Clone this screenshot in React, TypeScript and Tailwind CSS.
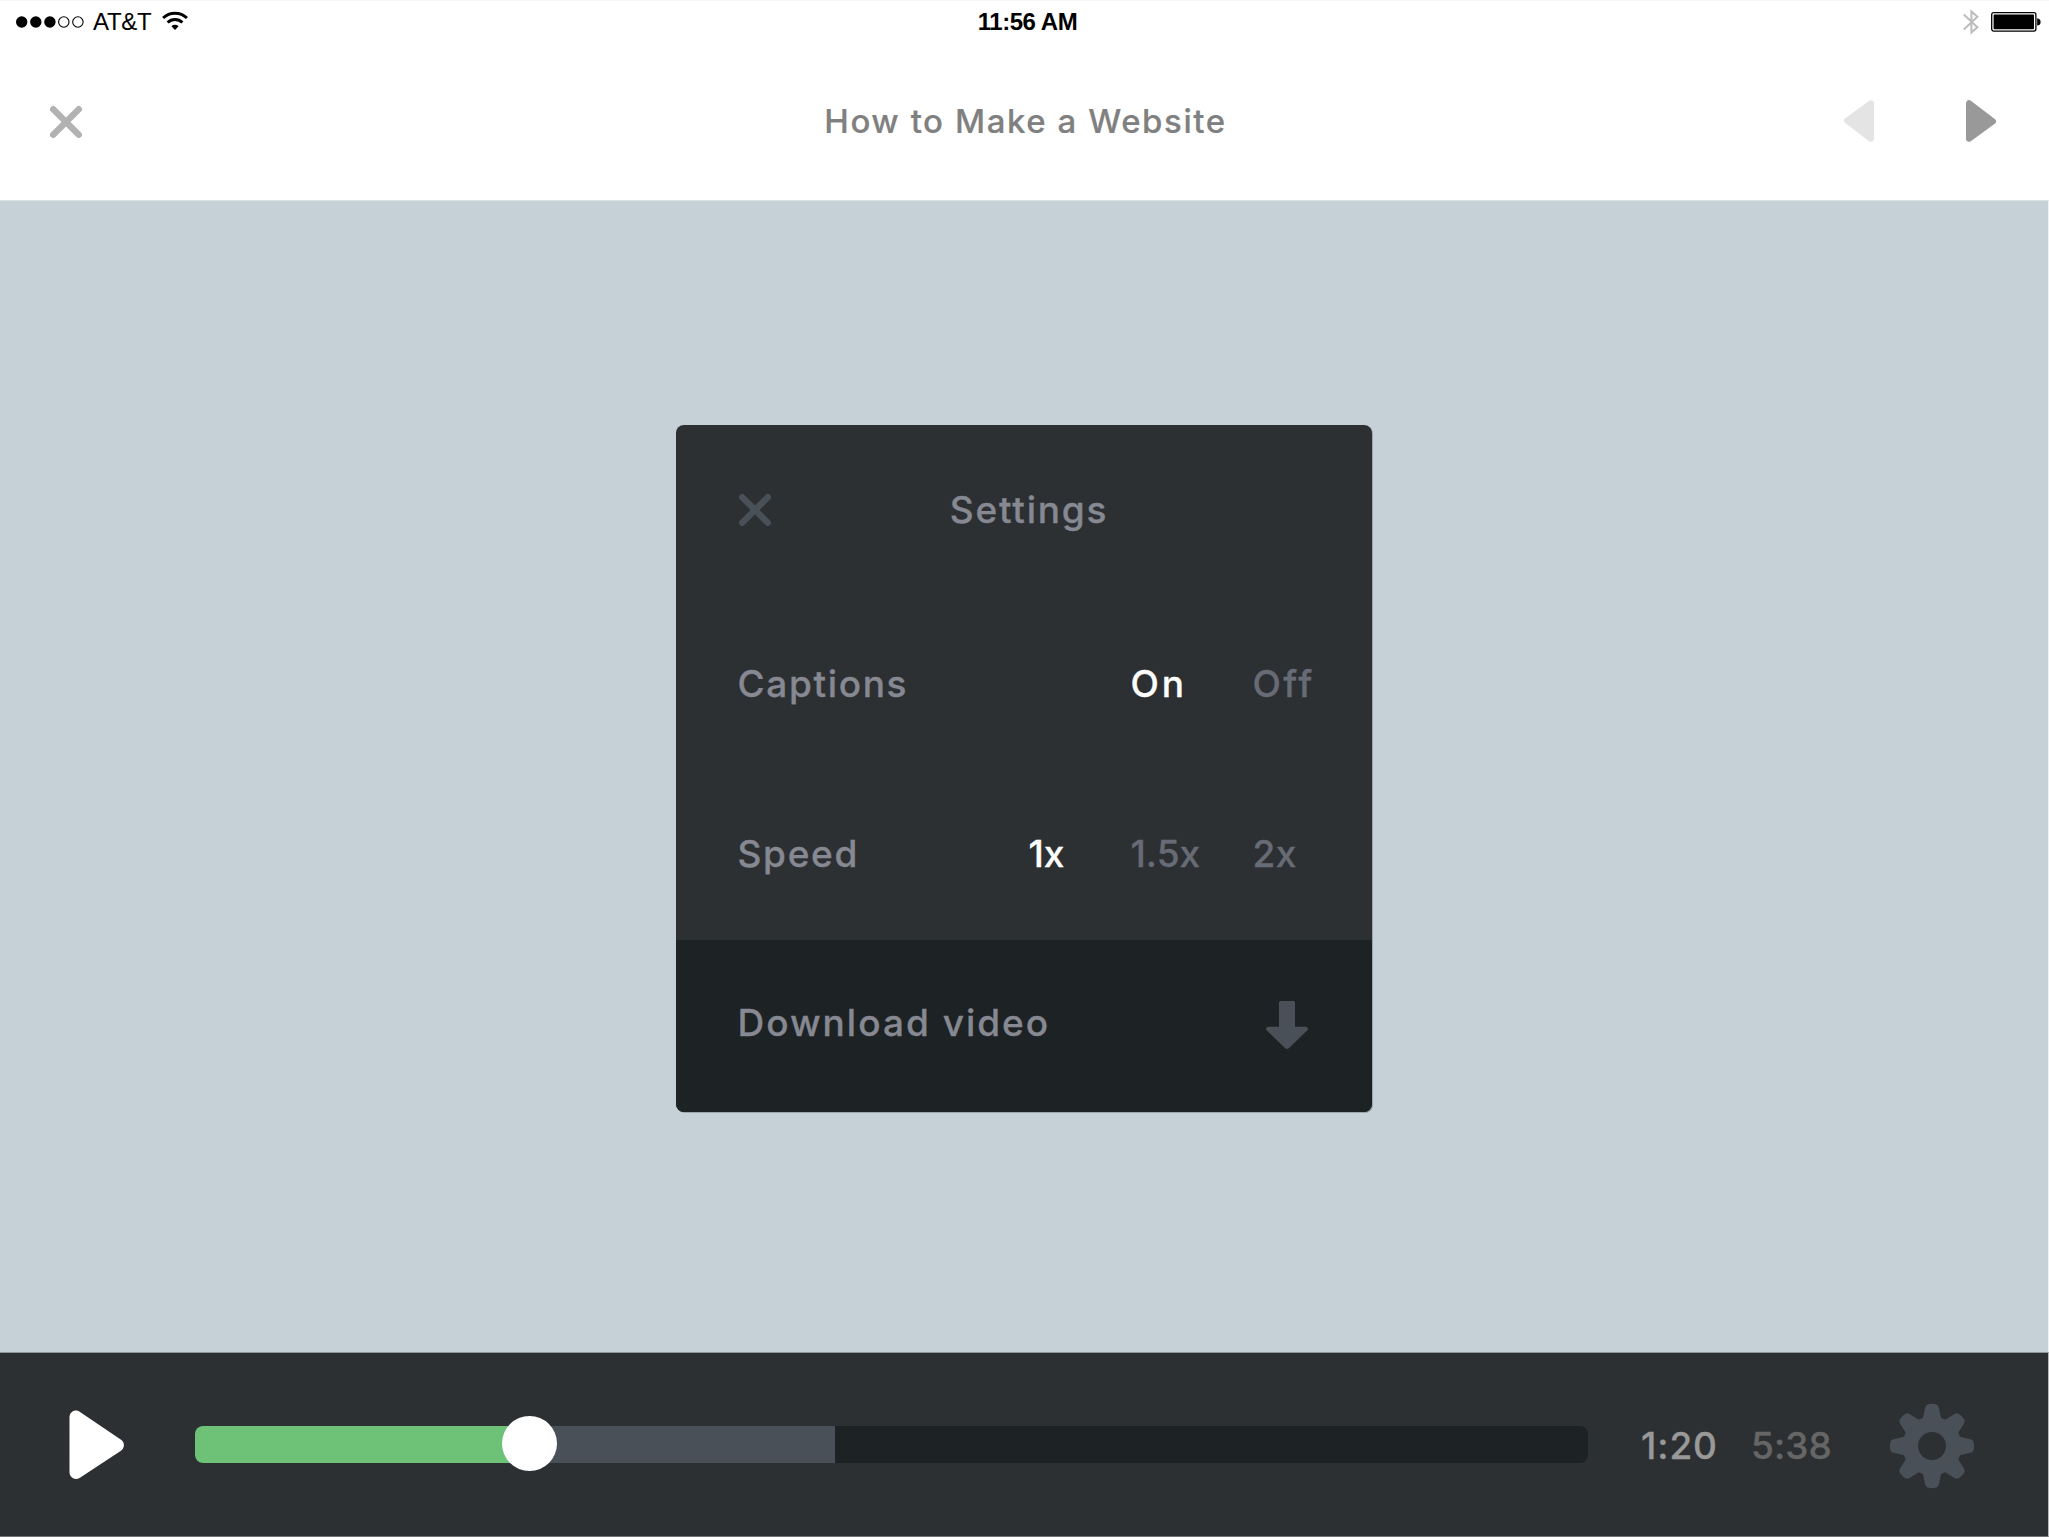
import type { ReactNode } from "react";

function CloseIcon({ className }: { className: string }) {
  return (
    <svg viewBox="0 0 34 34" className={`h-[34px] w-[34px] ${className}`} fill="none" stroke="currentColor" strokeWidth="6.4" strokeLinecap="round">
      <path d="M4.2 4.2 29.8 29.8M29.8 4.2 4.2 29.8" />
    </svg>
  );
}

function ArrowIcon({ className }: { className: string }) {
  return (
    <svg viewBox="0 0 30 42" className={`h-[42px] w-[30px] ${className}`} fill="currentColor" stroke="currentColor" strokeWidth="6" strokeLinejoin="round">
      <path d="M3 3.2V38.8L27 21.3Z" />
    </svg>
  );
}

function PlayIcon() {
  return (
    <svg viewBox="0 0 55 70" className="h-[70px] w-[55px] text-white" fill="currentColor" stroke="currentColor" strokeWidth="13" strokeLinejoin="round">
      <path d="M7 7V62.5L48.4 35.2Z" />
    </svg>
  );
}

function GearIcon() {
  const angles = [0, 45, 90, 135, 180, 225, 270, 315];
  return (
    <svg viewBox="-43 -43 86 86" className="h-[86px] w-[86px] text-[#495058]" fill="currentColor">
      <circle r="21.7" fill="none" stroke="currentColor" strokeWidth="15.4" />
      {angles.map((a) => (
        <path key={a} transform={`rotate(${a})`} d="M-10 -26 -8.9 -28.8 -6.8 -38.5Q-6.2 -41.2 -3.6 -41.8 0 -42.5 3.6 -41.8 6.2 -41.2 6.8 -38.5L8.9 -28.8 10 -26Z" />
      ))}
    </svg>
  );
}

function DownloadIcon() {
  return (
    <svg viewBox="0 0 42 48" className="h-[48px] w-[42px] text-[#495058]" fill="currentColor">
      <path d="M14.6 0H27.4Q29 0 29 1.6V25.8H39.6Q41 25.8 41.8 26.9 42.3 28.4 41.2 29.5L23 47Q21 48.8 19 47L.8 29.5Q-.3 28.4 .2 26.9 1 25.8 2.4 25.8H13V1.6Q13 0 14.6 0Z" />
    </svg>
  );
}

function SignalDots() {
  return (
    <svg viewBox="0 0 68 12" className="h-[12px] w-[68px]">
      {[5.7, 19.8, 33.9].map((x) => (
        <circle key={x} cx={x} cy="6" r="5.7" fill="#000" />
      ))}
      {[47.8, 61.9].map((x) => (
        <circle key={x} cx={x} cy="6" r="5.2" fill="none" stroke="#000" strokeWidth="1.1" />
      ))}
    </svg>
  );
}

function WifiIcon() {
  return (
    <svg viewBox="0 0 26 20" className="h-[20px] w-[26px]" fill="none" stroke="#000">
      <path d="M1.1 7A17 17 0 0 1 24.9 7" strokeWidth="3" />
      <path d="M5.6 11.5A10.6 10.6 0 0 1 20.4 11.5" strokeWidth="2.8" />
      <path d="M9.4 15.3A5.2 5.2 0 0 1 16.6 15.3L13 19Z" fill="#000" stroke="none" />
    </svg>
  );
}

function BluetoothIcon() {
  return (
    <svg viewBox="0 0 16 26" className="h-[26px] w-[16px]" fill="none" stroke="#bdbdbd" strokeWidth="2">
      <path d="M.8 5.6 14.4 18.2 8.4 23.6V2.4L14.4 7.8.8 20.4" />
    </svg>
  );
}

function BatteryIcon() {
  return (
    <svg viewBox="0 0 50 20" className="h-[20px] w-[50px]">
      <rect x=".7" y=".7" width="44.2" height="18.4" rx="2" fill="none" stroke="#000" strokeWidth="1.3" />
      <rect x="2.6" y="2.6" width="40.4" height="14.6" rx=".8" fill="#000" />
      <path d="M46.2 6.3Q49.6 6.8 49.6 9.9T46.2 13.5Z" fill="#000" />
    </svg>
  );
}

function SettingRow({ label, className, children }: { label: ReactNode; className: string; children: ReactNode }) {
  return (
    <div className={`grid grid-cols-[291px_102px_122px_auto] items-center pl-[61.5px] ${className}`}>
      {label}
      {children}
    </div>
  );
}

export default function App() {
  return (
    <div className="flex h-[1537px] w-[2049px] flex-col overflow-hidden bg-white font-['Inter',sans-serif] font-medium whitespace-nowrap">
      <header className="flex h-[200px] flex-col">
        <div className="grid h-[42px] grid-cols-[1fr_auto_1fr] items-center border-t border-[#f7f7f7] font-['Liberation_Sans',sans-serif] text-[24px] leading-[42px] font-normal text-black">
          <div className="flex items-center pl-4">
            <SignalDots />
            <span className="ml-[9px] tracking-[-0.3px]">AT&amp;T</span>
            <span className="-mt-[2px] ml-[11px]">
              <WifiIcon />
            </span>
          </div>
          <span className="relative left-[3px] font-bold tracking-[-0.44px]">11:56 AM</span>
          <div className="-mt-px flex items-center justify-end gap-3 pr-2">
            <BluetoothIcon />
            <BatteryIcon />
          </div>
        </div>
        <div className="grid h-[158px] grid-cols-[1fr_auto_1fr] items-center">
          <button className="mt-[2px] ml-[49px] w-[34px]">
            <CloseIcon className="text-[#b2b2b2]" />
          </button>
          <h1 className="relative left-[1px] mt-[2px] text-[33px] tracking-[1.56px] text-[#808080] [-webkit-text-stroke:0.2px_currentColor]">How to Make a Website</h1>
          <div className="flex items-center justify-end gap-[92px] pr-[53px]">
            <button>
              <ArrowIcon className="rotate-180 text-[#e4e4e4]" />
            </button>
            <button>
              <ArrowIcon className="text-[#999999]" />
            </button>
          </div>
        </div>
      </header>

      <main className="flex flex-1 items-start justify-center border-t border-r border-[#dbe3e5] border-r-[#eef2f3] bg-[#c5d1d6] pt-[224px]">
        <section className="flex h-[687px] w-[696px] flex-col overflow-hidden rounded-lg bg-[#2d3032] text-[37px] text-[#868892] shadow-[1px_1px_0_#9aa6a9] [-webkit-text-stroke:0.3px_currentColor]">
          <div className="grid h-[169px] grid-cols-[1fr_auto_1fr] items-center">
            <button className="ml-[62px] w-[34px]">
              <CloseIcon className="text-[#495058]" />
            </button>
            <h2 className="relative left-[5px] tracking-[1.77px]">Settings</h2>
          </div>
          <SettingRow className="h-[179px]" label={<span className="tracking-[1.65px]">Captions</span>}>
            <span />
            <span className="tracking-[3px] text-white">On</span>
            <span className="tracking-[2.4px] text-[#676b75]">Off</span>
          </SettingRow>
          <SettingRow className="h-[161px]" label={<span className="tracking-[1.69px]">Speed</span>}>
            <span className="text-white">1x</span>
            <span className="text-[#676b75]">1.5x</span>
            <span className="tracking-[0.5px] text-[#676b75]">2x</span>
          </SettingRow>
          <div className="mt-[6px] flex flex-1 items-center justify-between bg-[#1d2224] pr-[64px] pl-[61.5px]">
            <span className="-mt-[6px] tracking-[2px]">Download video</span>
            <span className="-mt-[2px]">
              <DownloadIcon />
            </span>
          </div>
        </section>
      </main>

      <footer className="flex h-[185px] items-center border-t border-r border-b border-t-[#8e9799] border-r-[#b5b7b8] border-b-[#717375] bg-[#2d3032] text-[37px] [-webkit-text-stroke:0.3px_currentColor]">
        <button className="w-[195px] pl-[69px]">
          <PlayIcon />
        </button>
        <div className="relative flex h-[37px] w-[1393px] rounded-lg bg-[#1d2224]">
          <div className="w-[334px] rounded-l-lg bg-[#6ec277]" />
          <div className="w-[306px] bg-[#495058]" />
          <div className="absolute top-[-10.5px] left-[306.8px] h-[55px] w-[55px] rounded-full bg-white" />
        </div>
        <span className="mt-[2px] ml-[53px] w-[110px] tracking-[0.9px] text-[#999999]">1:20</span>
        <span className="mt-[2px] w-[138px] tracking-[0.1px] text-[#666666]">5:38</span>
        <button className="mt-[2px]">
          <GearIcon />
        </button>
      </footer>
    </div>
  );
}
